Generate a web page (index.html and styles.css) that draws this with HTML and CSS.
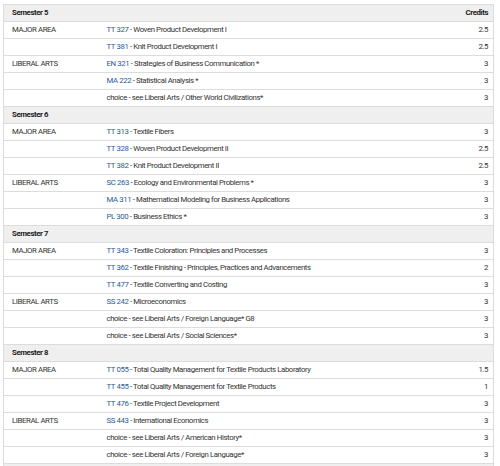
FILE: index.html
```html
<!DOCTYPE html>
<html>
<head>
<meta charset="utf-8">
<link rel="stylesheet" href="styles.css">
</head>
<body>
<table class="plan">
<colgroup><col class="c1"><col class="c2"><col class="c3"></colgroup>
<tr class="sem"><th>Semester 5</th><th></th><th class="cr">Credits</th></tr>
<tr><td>MAJOR AREA</td><td><a>TT 327</a> - Woven Product Development I</td><td class="cr">2.5</td></tr>
<tr><td></td><td><a>TT 381</a> - Knit Product Development I</td><td class="cr">2.5</td></tr>
<tr><td>LIBERAL ARTS</td><td><a>EN 321</a> - Strategies of Business Communication *</td><td class="cr">3</td></tr>
<tr><td></td><td><a>MA 222</a> - Statistical Analysis *</td><td class="cr">3</td></tr>
<tr><td></td><td>choice - see Liberal Arts / Other World Civilizations*</td><td class="cr">3</td></tr>
<tr class="sem"><th>Semester 6</th><th></th><th></th></tr>
<tr><td>MAJOR AREA</td><td><a>TT 313</a> - Textile Fibers</td><td class="cr">3</td></tr>
<tr><td></td><td><a>TT 328</a> - Woven Product Development II</td><td class="cr">2.5</td></tr>
<tr><td></td><td><a>TT 382</a> - Knit Product Development II</td><td class="cr">2.5</td></tr>
<tr><td>LIBERAL ARTS</td><td><a>SC 263</a> - Ecology and Environmental Problems *</td><td class="cr">3</td></tr>
<tr><td></td><td><a>MA 311</a> - Mathematical Modeling for Business Applications</td><td class="cr">3</td></tr>
<tr><td></td><td><a>PL 300</a> - Business Ethics *</td><td class="cr">3</td></tr>
<tr class="sem"><th>Semester 7</th><th></th><th></th></tr>
<tr><td>MAJOR AREA</td><td><a>TT 343</a> - Textile Coloration: Principles and Processes</td><td class="cr">3</td></tr>
<tr><td></td><td><a>TT 362</a> - Textile Finishing - Principles, Practices and Advancements</td><td class="cr">2</td></tr>
<tr><td></td><td><a>TT 477</a> - Textile Converting and Costing</td><td class="cr">3</td></tr>
<tr><td>LIBERAL ARTS</td><td><a>SS 242</a> - Microeconomics</td><td class="cr">3</td></tr>
<tr><td></td><td>choice - see Liberal Arts / Foreign Language* G8</td><td class="cr">3</td></tr>
<tr><td></td><td>choice - see Liberal Arts / Social Sciences*</td><td class="cr">3</td></tr>
<tr class="sem"><th>Semester 8</th><th></th><th></th></tr>
<tr><td>MAJOR AREA</td><td><a>TT 055</a> - Total Quality Management for Textile Products Laboratory</td><td class="cr">1.5</td></tr>
<tr><td></td><td><a>TT 455</a> - Total Quality Management for Textile Products</td><td class="cr">1</td></tr>
<tr><td></td><td><a>TT 476</a> - Textile Project Development</td><td class="cr">3</td></tr>
<tr><td>LIBERAL ARTS</td><td><a>SS 443</a> - International Economics</td><td class="cr">3</td></tr>
<tr><td></td><td>choice - see Liberal Arts / American History*</td><td class="cr">3</td></tr>
<tr><td></td><td>choice - see Liberal Arts / Foreign Language*</td><td class="cr">3</td></tr>
<tr class="sem"><th>&nbsp;</th><th></th><th></th></tr>
</table>
</body>
</html>
```
FILE: styles.css
```css
html, body {
  margin: 0;
  padding: 0;
  background: #fff;
}
body {
  padding: 4px 6px 0 3px;
  font-family: Roboto, "Liberation Sans", Arial, sans-serif;
  font-size: 7.8px;
  letter-spacing: -0.4px;
  color: #333;
}
.plan {
  width: 491px;
  border-collapse: collapse;
  table-layout: fixed;
  border: 1px solid #dcdcdc;
}
.c1 { width: 95px; }
.c3 { width: 60px; }
.plan th, .plan td {
  height: 16px;
  padding: 0 5px 0 8px;
  border-top: 1px solid #dcdcdc;
  text-align: left;
  white-space: nowrap;
  overflow: hidden;
  line-height: 16px;
}
.plan th {
  background: #efefef;
  font-weight: bold;
  color: #222;
}
.plan .cr { text-align: right; }
.plan a {
  color: #2c5b9c;
  text-decoration: none;
}
```
